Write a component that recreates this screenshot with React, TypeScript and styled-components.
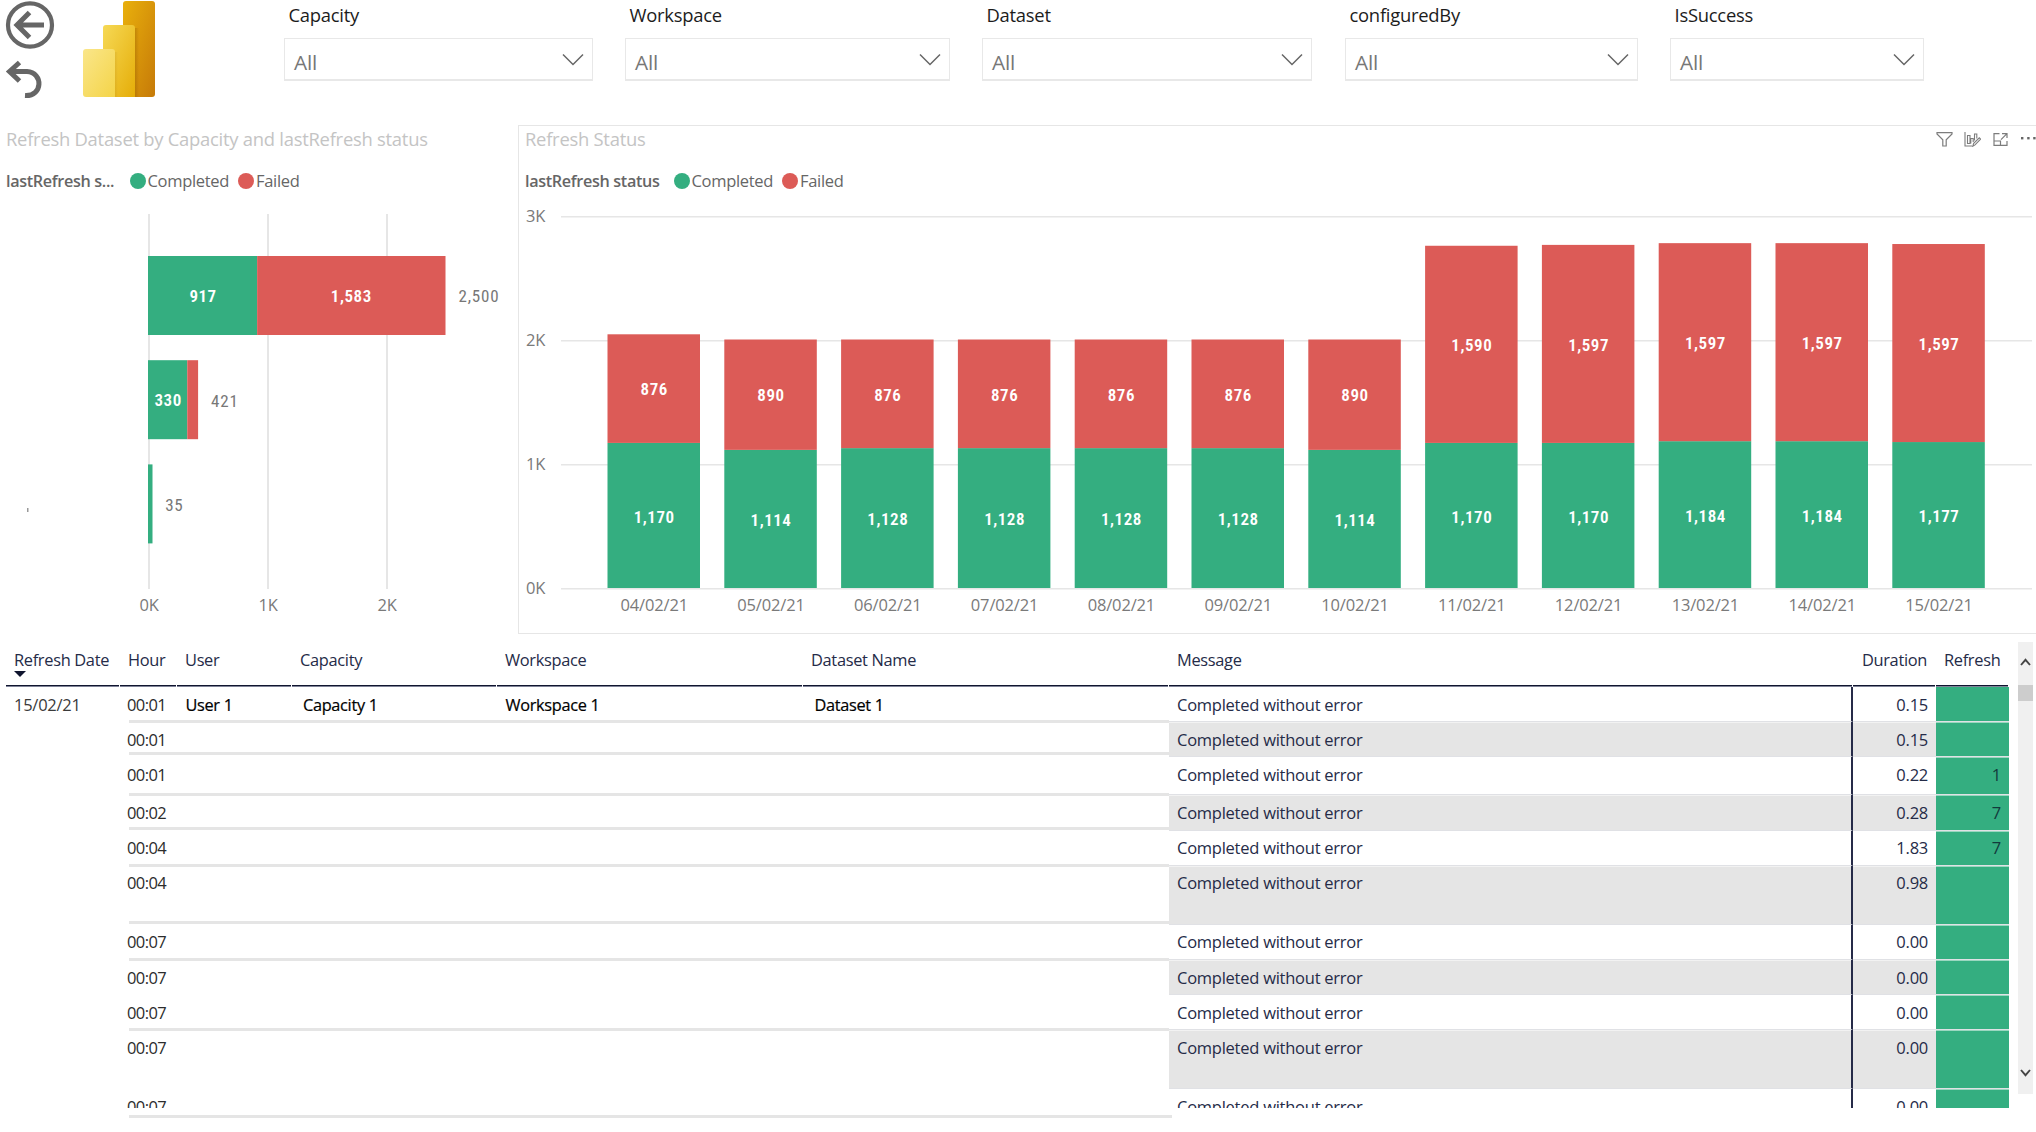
import React from "react";
import styled, { createGlobalStyle } from "styled-components";

const GREEN = "#34ae80";
const RED = "#dc5b57";
const INK = "#252b48";
const LINE = "#e6e6e6";

const GlobalStyle = createGlobalStyle`
  html, body { margin: 0; background: #fff; }
  body {
    font-family: "Open Sans", "Noto Sans", sans-serif;
    font-size: 16.5px;
    letter-spacing: -0.25px;
    overflow: hidden;
  }
  * { box-sizing: border-box; }
`;

const Page = styled.div`
  width: 2036px;
  height: 1132px;
  display: grid;
  grid-template-rows: 125px 509px 1fr;
  background: #fff;
`;

/* ---------- header ---------- */

const Header = styled.header`
  display: flex;
  align-items: flex-start;
`;

const NavButtons = styled.nav`
  width: 83px;
  padding: 1px 0 0 5px;
  display: flex;
  flex-direction: column;
  gap: 11px;
  svg { display: block; }
`;

const LogoBox = styled.div`
  width: 201px;
  padding-top: 1px;
  svg { display: block; }
`;

const Slicer = styled.div<{ $width: number; $gap: number }>`
  width: ${(p) => p.$width}px;
  margin-right: ${(p) => p.$gap}px;
`;

const SlicerLabel = styled.div`
  height: 38px;
  padding-left: 4.5px;
  font-size: 18.4px;
  line-height: 30px;
  color: #1c1c1c;
`;

const SlicerBox = styled.div`
  height: 43px;
  display: flex;
  align-items: center;
  justify-content: space-between;
  padding: 0 8px 0 9px;
  border: 1px solid #e8e8e8;
  border-bottom-width: 2px;
  svg { margin-top: 1px; }
`;

const SlicerValue = styled.span`
  padding-top: 6px;
  font-size: 20.8px;
  letter-spacing: -0.2px;
  line-height: 30px;
  color: #777;
`;

/* ---------- charts ---------- */

const Charts = styled.section`
  display: grid;
  grid-template-columns: 518px 1518px;
`;

const Panel = styled.article<{ $framed?: boolean }>`
  border: 1px solid ${(p) => (p.$framed ? LINE : "transparent")};
  border-right: 0;
  display: grid;
  grid-template-rows: 43px 24px 440px;
`;

const PanelHead = styled.div<{ $pad: number }>`
  display: flex;
  justify-content: space-between;
  padding-left: ${(p) => p.$pad}px;
`;

const PanelTitle = styled.h2`
  margin: 0;
  font-size: 18.4px;
  font-weight: 400;
  line-height: 26px;
  color: #c4c4c4;
`;

const VisualActions = styled.div`
  display: flex;
  gap: 11px;
  margin-right: -1px;
  padding-top: 4px;
  svg { display: block; }
`;

const Legend = styled.div<{ $pad: number }>`
  display: flex;
  align-items: center;
  padding-left: ${(p) => p.$pad}px;
  line-height: 24px;
  letter-spacing: -0.32px;
  color: #666;
`;

const LegendTitle = styled.span<{ $width: number }>`
  width: ${(p) => p.$width}px;
  font-size: 16.2px;
  font-weight: 600;
  letter-spacing: -0.34px;
  white-space: nowrap;
`;

const LegendItem = styled.span<{ $width: number }>`
  display: flex;
  align-items: center;
  gap: 2px;
  width: ${(p) => p.$width}px;
`;

const Dot = styled.i<{ $color: string }>`
  width: 16px;
  height: 16px;
  border-radius: 50%;
  background: ${(p) => p.$color};
`;

const Chart = styled.svg`
  display: block;
`;

const AxisText = styled.text`
  font-size: 16.5px;
  letter-spacing: -0.15px;
  fill: #7a7a7a;
`;

const BarText = styled.text`
  font-family: Roboto, sans-serif;
  font-size: 17px;
  font-weight: 600;
  font-stretch: 87.5%;
  letter-spacing: 0.55px;
  fill: #fff;
`;

const TotalText = styled(BarText)`
  font-weight: 400;
  letter-spacing: 0.8px;
  fill: #777;
`;

/* ---------- table ---------- */

const TableArea = styled.section`
  display: flex;
  align-items: flex-start;
  padding-left: 6px;
  gap: 9px;
`;

const Table = styled.div`
  width: 2003px;
  color: ${INK};
`;

const COLS = "114px 57px 115px 205px 306px 366px 684px 83px 73px";

const HeadRow = styled.div`
  display: grid;
  grid-template-columns: ${COLS};
  height: 53px;
`;

const HeadCell = styled.div<{ $right?: boolean }>`
  margin-right: 1px;
  padding: 13px 8px 0;
  font-size: 16.4px;
  letter-spacing: -0.32px;
  line-height: 26px;
  white-space: nowrap;
  text-align: ${(p) => (p.$right ? "right" : "left")};
  border-bottom: 1px solid #7f8398;
  box-shadow: inset 0 -1px 0 #10152f;
`;

const SortMark = styled.div`
  width: 0;
  margin-top: -2px;
  border: solid transparent;
  border-width: 6px 6px 0;
  border-top-color: #10152f;
`;

const Body = styled.div`
  height: 421px;
  overflow: hidden;
`;

const Row = styled.div<{ $height: number; $lead: number }>`
  display: grid;
  grid-template-columns: ${COLS};
  grid-template-rows: 100%;
  height: ${(p) => p.$height}px;
  --lead: ${(p) => p.$lead}px;
`;

const Cell = styled.div<{ $col: number; $indent?: number }>`
  grid-row: 1;
  grid-column: ${(p) => p.$col};
  padding: var(--lead) 8px 0 ${(p) => p.$indent ?? 8}px;
  line-height: 24px;
  white-space: nowrap;
`;

const DateCell = styled(Cell)`
  color: #3a3a3a;
`;

const HourCell = styled(Cell)`
  letter-spacing: -0.6px;
  color: #2c2c2c;
`;

const NameCell = styled(Cell)`
  font-size: 16.3px;
  font-weight: 500;
  letter-spacing: -0.3px;
  color: #000;
  -webkit-text-stroke: 0.2px #000;
`;

const ShadedCell = styled(Cell)<{ $shaded: boolean; $first: boolean }>`
  padding-top: ${(p) => (p.$first ? "var(--lead)" : "calc(var(--lead) - 1px)")};
  border-top: ${(p) => (p.$first ? 0 : 1)}px solid #e0e1e5;
  background: ${(p) => (p.$shaded ? "#e5e5e5" : "#fff")};
  box-shadow: inset 0 ${(p) => (p.$first ? 0 : 1)}px 0 rgba(255, 255, 255, 0.5);
`;

const MessageCell = styled(ShadedCell)`
  border-right: 2px solid #262b48;
`;

const DurationCell = styled(ShadedCell)`
  text-align: right;
`;

const RefreshCell = styled(ShadedCell)`
  text-align: right;
  color: #123a3c;
  background: ${GREEN};
`;

const RowRule = styled.div<{ $drop: number }>`
  grid-row: 1;
  grid-column: 2 / 7;
  align-self: end;
  height: 3px;
  margin: 0 0 ${(p) => -p.$drop}px 9px;
  background: #e5e5e5;
`;

const EndRule = styled.div`
  width: 1043px;
  height: 3px;
  margin: 7px 0 0 123px;
  background: #e5e5e5;
`;

const Scrollbar = styled.div`
  width: 15px;
  height: 452px;
  margin-top: 8px;
  display: flex;
  flex-direction: column;
  align-items: center;
  background: #f0f0f0;
  svg { display: block; }
`;

const ScrollThumb = styled.div`
  width: 15px;
  height: 16px;
  margin: 19px 0 auto;
  background: #cdcdcd;
`;

const ScrollUp = styled.div`
  padding-top: 16px;
`;

const ScrollDown = styled.div`
  padding-bottom: 17px;
`;

/* ---------- data ---------- */

const slicers = [
  { label: "Capacity", width: 309, gap: 32 },
  { label: "Workspace", width: 325, gap: 32 },
  { label: "Dataset", width: 330, gap: 33 },
  { label: "configuredBy", width: 293, gap: 32 },
  { label: "IsSuccess", width: 254, gap: 0 },
];

const capacityBars = [
  { completed: 917, failed: 1583, total: "2,500" },
  { completed: 330, failed: 91, total: "421" },
  { completed: 35, failed: 0, total: "35" },
];

const days: [string, number, number][] = [
  ["04/02/21", 1170, 876],
  ["05/02/21", 1114, 890],
  ["06/02/21", 1128, 876],
  ["07/02/21", 1128, 876],
  ["08/02/21", 1128, 876],
  ["09/02/21", 1128, 876],
  ["10/02/21", 1114, 890],
  ["11/02/21", 1170, 1590],
  ["12/02/21", 1170, 1597],
  ["13/02/21", 1184, 1597],
  ["14/02/21", 1184, 1597],
  ["15/02/21", 1177, 1597],
];

interface RefreshRow {
  hour: string;
  height: number;
  lead: number;
  rule: number | null;
  duration: string;
  refresh?: string;
}

const rows: RefreshRow[] = [
  { hour: "00:01", height: 34, lead: 6, rule: 2, duration: "0.15" },
  { hour: "00:01", height: 35, lead: 7, rule: -1, duration: "0.15" },
  { hour: "00:01", height: 38, lead: 7, rule: 2, duration: "0.22", refresh: "1" },
  { hour: "00:02", height: 36, lead: 7, rule: 0, duration: "0.28", refresh: "7" },
  { hour: "00:04", height: 35, lead: 6, rule: 2, duration: "1.83", refresh: "7" },
  { hour: "00:04", height: 59, lead: 6, rule: 0, duration: "0.98" },
  { hour: "00:07", height: 35, lead: 6, rule: 2, duration: "0.00" },
  { hour: "00:07", height: 35, lead: 7, rule: null, duration: "0.00" },
  { hour: "00:07", height: 35, lead: 7, rule: 2, duration: "0.00" },
  { hour: "00:07", height: 59, lead: 7, rule: null, duration: "0.00" },
  { hour: "00:07", height: 35, lead: 7, rule: null, duration: "0.00" },
];

/* ---------- drawings ---------- */

const BackIcon = () => (
  <svg width="50" height="48" viewBox="0 0 50 48" fill="none" stroke="#666">
    <ellipse cx="25" cy="24" rx="22" ry="21.700" strokeWidth="4.200" />
    <path d="M39 24H12M24.500 11.500 12 24l12.500 12.500" strokeWidth="5" />
  </svg>
);

const UndoIcon = () => (
  <svg width="40" height="40" viewBox="0 0 40 40" fill="none" stroke="#666" strokeWidth="5">
    <path d="M14.500 2.500 4.500 11.500l10 9.500M5 11.500H22C38.500 12.500 38 36.500 20 35.500" />
  </svg>
);

const PowerLogo = () => (
  <svg width="72" height="96" viewBox="0 0 72 96">
    <defs>
      <linearGradient id="tall" x1="0" y1="0" x2="1" y2="1">
        <stop offset="0" stopColor="#e9b00c" />
        <stop offset="1" stopColor="#c67a08" />
      </linearGradient>
      <linearGradient id="mid" x1="0" y1="0" x2="1" y2="1">
        <stop offset="0" stopColor="#f6d955" />
        <stop offset="1" stopColor="#e5ad08" />
      </linearGradient>
      <linearGradient id="short" x1="0" y1="0" x2="1" y2="1">
        <stop offset="0" stopColor="#fae68a" />
        <stop offset="1" stopColor="#f4d448" />
      </linearGradient>
      <linearGradient id="shade" x1="0" y1="0" x2="1" y2="0">
        <stop offset="0" stopColor="#7a4a00" stopOpacity="0.28" />
        <stop offset="1" stopColor="#7a4a00" stopOpacity="0" />
      </linearGradient>
    </defs>
    <path d="M43 0H69a3 3 0 0 1 3 3V93a3 3 0 0 1-3 3H40V3a3 3 0 0 1 3-3Z" fill="url(#tall)" />
    <rect x="52" y="27" width="4" height="69" fill="url(#shade)" />
    <path d="M23 24H49a3 3 0 0 1 3 3V96H20V27a3 3 0 0 1 3-3Z" fill="url(#mid)" />
    <rect x="32" y="51" width="3" height="45" fill="url(#shade)" opacity="0.4" />
    <path d="M3 48H29a3 3 0 0 1 3 3V96H3a3 3 0 0 1-3-3V51a3 3 0 0 1 3-3Z" fill="url(#short)" />
  </svg>
);

const ChevronDown = () => (
  <svg width="22" height="13" viewBox="0 0 22 13" fill="none" stroke="#666" strokeWidth="1.500">
    <path d="m1 1.500 10 10 10-10" />
  </svg>
);

const ActionIcons = () => (
  <VisualActions>
    <svg width="17" height="17" viewBox="0 0 17 17" fill="none" stroke="#7c7c7c" strokeWidth="1.200">
      <path d="M1 2.600H16V4L10.200 9.800V16H6.800V9.800L1 4Z" />
    </svg>
    <svg width="17" height="17" viewBox="0 0 17 17" fill="none" stroke="#7c7c7c" strokeWidth="1.100">
      <path d="M1 2V16H8M3.500 13.500V5.500H6V13.500ZM6.800 13.500V8.500H9.200V12M10.500 10.500V4H12.800V8.500" />
      <path d="m8.800 16.200.9-2.800 5.600-5.600 1.300 1.300-5.600 5.800Z" />
    </svg>
    <svg width="17" height="17" viewBox="0 0 17 17" fill="none" stroke="#7c7c7c" strokeWidth="1.200">
      <path d="M7.500 3.600H2V15.400H15V11M2 11H8.500V15.400M10 3.600H15V8M14.700 3.900 9 9.600" />
    </svg>
    <svg width="17" height="17" viewBox="0 0 17 17" fill="#666">
      <rect x="1" y="7" width="2.400" height="2.400" />
      <rect x="7.200" y="7" width="2.400" height="2.400" />
      <rect x="13.200" y="7" width="2.400" height="2.400" />
    </svg>
  </VisualActions>
);

const ScrollArrow = ({ d }: { d: string }) => (
  <svg width="11" height="8" viewBox="0 0 11 8" fill="none" stroke="#444" strokeWidth="1.900">
    <path d={d} />
  </svg>
);

const CapacityChart = () => {
  const x0 = 147;
  const unit = 0.119;
  return (
    <Chart width="517" height="440">
      {[0, 1, 2].map((k) => (
        <React.Fragment key={k}>
          <rect x={x0 + k * 119} y={21} width={2} height={375} fill={LINE} />
          <AxisText x={x0 + 1 + k * 119} y={418} textAnchor="middle">{`${k}K`}</AxisText>
        </React.Fragment>
      ))}
      {capacityBars.map((b, i) => {
        const y = 63 + i * 104.2;
        const w1 = b.completed * unit;
        const w2 = b.failed * unit;
        return (
          <React.Fragment key={b.total}>
            <rect x={x0} y={y} width={Math.max(w1, 4.5)} height={79} fill={GREEN} />
            <rect x={x0 + w1} y={y} width={w2} height={79} fill={RED} />
            {b.completed > 100 && (
              <BarText x={x0 + w1 / 2 + 0.5} y={y + 46} textAnchor="middle">{b.completed}</BarText>
            )}
            {b.failed > 100 && (
              <BarText x={x0 + w1 + w2 / 2} y={y + 46} textAnchor="middle">
                {b.failed.toLocaleString("en-US")}
              </BarText>
            )}
            <TotalText x={x0 + w1 + w2 + 13} y={Math.round(y + 46.3)}>{b.total}</TotalText>
          </React.Fragment>
        );
      })}
      <rect x="26" y="315" width="1.500" height="4" fill="#999" />
    </Chart>
  );
};

const StatusChart = () => {
  const base = 395;
  const unit = 0.124;
  return (
    <Chart width="1517" height="440">
      {[0, 1, 2, 3].map((k) => (
        <React.Fragment key={k}>
          <rect x={42} y={base - k * 124} width={1471} height={1.5} fill={LINE} />
          <AxisText x={7} y={base + 6 - k * 124}>{`${k}K`}</AxisText>
        </React.Fragment>
      ))}
      {days.map(([day, ok, bad], i) => {
        const x = 88.5 + i * 116.8;
        const h1 = ok * unit;
        const h2 = bad * unit;
        return (
          <React.Fragment key={day}>
            <rect x={x} y={base - h1} width={92.5} height={h1} fill={GREEN} />
            <rect x={x} y={base - h1 - h2} width={92.5} height={h2} fill={RED} />
            <BarText x={x + 46.7} y={base - h1 / 2 + 7.2} textAnchor="middle">
              {ok.toLocaleString("en-US")}
            </BarText>
            <BarText x={x + 46.7} y={base - h1 - h2 / 2 + 6.7} textAnchor="middle">
              {bad.toLocaleString("en-US")}
            </BarText>
            <AxisText x={x + 46.7} y={418} textAnchor="middle">{day}</AxisText>
          </React.Fragment>
        );
      })}
    </Chart>
  );
};

const ChartLegend = ({ title, width, pad }: { title: string; width: number; pad: number }) => (
  <Legend $pad={pad}>
    <LegendTitle $width={width}>{title}</LegendTitle>
    <LegendItem $width={108.5}>
      <Dot $color={GREEN} />
      Completed
    </LegendItem>
    <LegendItem $width={70}>
      <Dot $color={RED} />
      Failed
    </LegendItem>
  </Legend>
);

export default function App() {
  return (
    <>
      <GlobalStyle />
      <Page>
        <Header>
          <NavButtons>
            <BackIcon />
            <UndoIcon />
          </NavButtons>
          <LogoBox>
            <PowerLogo />
          </LogoBox>
          {slicers.map((s) => (
            <Slicer key={s.label} $width={s.width} $gap={s.gap}>
              <SlicerLabel>{s.label}</SlicerLabel>
              <SlicerBox>
                <SlicerValue>All</SlicerValue>
                <ChevronDown />
              </SlicerBox>
            </Slicer>
          ))}
        </Header>

        <Charts>
          <Panel>
            <PanelHead $pad={5}>
              <PanelTitle>Refresh Dataset by Capacity and lastRefresh status</PanelTitle>
            </PanelHead>
            <ChartLegend title="lastRefresh s..." width={123.5} pad={5} />
            <CapacityChart />
          </Panel>
          <Panel $framed>
            <PanelHead $pad={6}>
              <PanelTitle>Refresh Status</PanelTitle>
              <ActionIcons />
            </PanelHead>
            <ChartLegend title="lastRefresh status" width={148.5} pad={6} />
            <StatusChart />
          </Panel>
        </Charts>

        <TableArea>
          <Table>
            <HeadRow>
              <HeadCell>
                Refresh Date
                <SortMark />
              </HeadCell>
              <HeadCell>Hour</HeadCell>
              <HeadCell>User</HeadCell>
              <HeadCell>Capacity</HeadCell>
              <HeadCell>Workspace</HeadCell>
              <HeadCell>Dataset Name</HeadCell>
              <HeadCell>Message</HeadCell>
              <HeadCell $right>Duration</HeadCell>
              <HeadCell $right>Refresh</HeadCell>
            </HeadRow>
            <Body>
              {rows.map((r, i) => (
                <Row key={i} $height={r.height} $lead={r.lead}>
                  {r.rule !== null && <RowRule $drop={r.rule} />}
                  {i === 0 && (
                    <>
                      <DateCell $col={1}>15/02/21</DateCell>
                      <NameCell $col={3} $indent={8.5}>User 1</NameCell>
                      <NameCell $col={4} $indent={11}>Capacity 1</NameCell>
                      <NameCell $col={5} $indent={8.5}>Workspace 1</NameCell>
                      <NameCell $col={6} $indent={11.5}>Dataset 1</NameCell>
                    </>
                  )}
                  <HourCell $col={2} $indent={7}>{r.hour}</HourCell>
                  <MessageCell $col={7} $shaded={i % 2 === 1} $first={i === 0}>
                    Completed without error
                  </MessageCell>
                  <DurationCell $col={8} $shaded={i % 2 === 1} $first={i === 0}>
                    {r.duration}
                  </DurationCell>
                  <RefreshCell $col={9} $shaded={false} $first={i === 0}>
                    {r.refresh}
                  </RefreshCell>
                </Row>
              ))}
            </Body>
            <EndRule />
          </Table>
          <Scrollbar>
            <ScrollUp>
              <ScrollArrow d="M1 7 5.500 1.800 10 7" />
            </ScrollUp>
            <ScrollThumb />
            <ScrollDown>
              <ScrollArrow d="M1 1 5.500 6.200 10 1" />
            </ScrollDown>
          </Scrollbar>
        </TableArea>
      </Page>
    </>
  );
}
